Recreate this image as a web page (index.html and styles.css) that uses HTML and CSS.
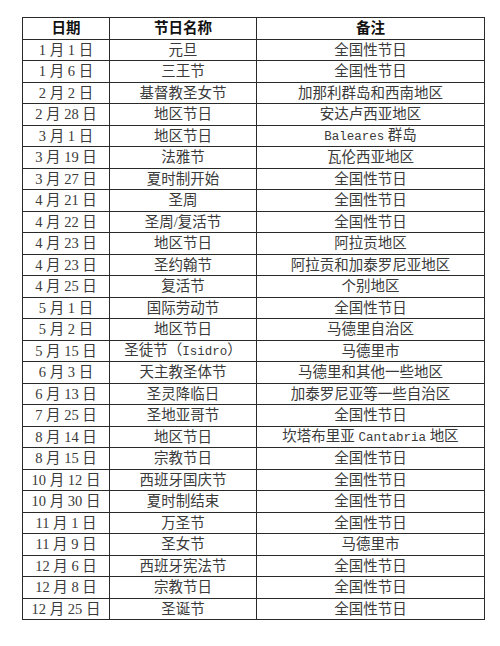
FILE: index.html
```html
<!DOCTYPE html>
<html lang="zh">
<head>
<meta charset="utf-8">
<title>西班牙节日</title>
<link rel="stylesheet" href="styles.css">
</head>
<body>
<table class="holidays">
  <colgroup>
    <col class="c-date">
    <col class="c-name">
    <col class="c-note">
  </colgroup>
  <thead>
    <tr><th>日期</th><th>节日名称</th><th>备注</th></tr>
  </thead>
  <tbody>
    <tr><td>1 月 1 日</td><td>元旦</td><td>全国性节日</td></tr>
    <tr><td>1 月 6 日</td><td>三王节</td><td>全国性节日</td></tr>
    <tr><td>2 月 2 日</td><td>基督教圣女节</td><td>加那利群岛和西南地区</td></tr>
    <tr><td>2 月 28 日</td><td>地区节日</td><td>安达卢西亚地区</td></tr>
    <tr><td>3 月 1 日</td><td>地区节日</td><td><span class="lat">Baleares</span> 群岛</td></tr>
    <tr><td>3 月 19 日</td><td>法雅节</td><td>瓦伦西亚地区</td></tr>
    <tr><td>3 月 27 日</td><td>夏时制开始</td><td>全国性节日</td></tr>
    <tr><td>4 月 21 日</td><td>圣周</td><td>全国性节日</td></tr>
    <tr><td>4 月 22 日</td><td>圣周/复活节</td><td>全国性节日</td></tr>
    <tr><td>4 月 23 日</td><td>地区节日</td><td>阿拉贡地区</td></tr>
    <tr><td>4 月 23 日</td><td>圣约翰节</td><td>阿拉贡和加泰罗尼亚地区</td></tr>
    <tr><td>4 月 25 日</td><td>复活节</td><td>个别地区</td></tr>
    <tr><td>5 月 1 日</td><td>国际劳动节</td><td>全国性节日</td></tr>
    <tr><td>5 月 2 日</td><td>地区节日</td><td>马德里自治区</td></tr>
    <tr><td>5 月 15 日</td><td>圣徒节（<span class="lat">Isidro</span>）</td><td>马德里市</td></tr>
    <tr><td>6 月 3 日</td><td>天主教圣体节</td><td>马德里和其他一些地区</td></tr>
    <tr><td>6 月 13 日</td><td>圣灵降临日</td><td>加泰罗尼亚等一些自治区</td></tr>
    <tr><td>7 月 25 日</td><td>圣地亚哥节</td><td>全国性节日</td></tr>
    <tr><td>8 月 14 日</td><td>地区节日</td><td>坎塔布里亚 <span class="lat">Cantabria</span> 地区</td></tr>
    <tr><td>8 月 15 日</td><td>宗教节日</td><td>全国性节日</td></tr>
    <tr><td>10 月 12 日</td><td>西班牙国庆节</td><td>全国性节日</td></tr>
    <tr><td>10 月 30 日</td><td>夏时制结束</td><td>全国性节日</td></tr>
    <tr><td>11 月 1 日</td><td>万圣节</td><td>全国性节日</td></tr>
    <tr><td>11 月 9 日</td><td>圣女节</td><td>马德里市</td></tr>
    <tr><td>12 月 6 日</td><td>西班牙宪法节</td><td>全国性节日</td></tr>
    <tr><td>12 月 8 日</td><td>宗教节日</td><td>全国性节日</td></tr>
    <tr><td>12 月 25 日</td><td>圣诞节</td><td>全国性节日</td></tr>
  </tbody>
</table>
</body>
</html>
```
FILE: styles.css
```css
html, body {
  margin: 0;
  background: #ffffff;
}
body {
  padding: 17px 0 0 22px;
  font-family: "Liberation Serif", "Noto Sans CJK SC", serif;
  font-size: 14.5px;
  color: #3a3a3a;
}
.holidays {
  border-collapse: collapse;
  table-layout: fixed;
  width: 462px;
  border: 1.5px solid #222;
}
.c-date { width: 87px; }
.c-name { width: 147px; }
.c-note { width: 228px; }
.holidays th,
.holidays td {
  border: 1px solid #2a2a2a;
  height: 21.5px;
  padding: 0;
  text-align: center;
  vertical-align: middle;
  line-height: 18px;
  white-space: nowrap;
  box-sizing: border-box;
}
.holidays th {
  font-weight: bold;
  color: #111;
}
.holidays tr {
  height: 21.5px;
}
.lat {
  font-family: "Liberation Mono", monospace;
  font-size: 12.5px;
}
```
